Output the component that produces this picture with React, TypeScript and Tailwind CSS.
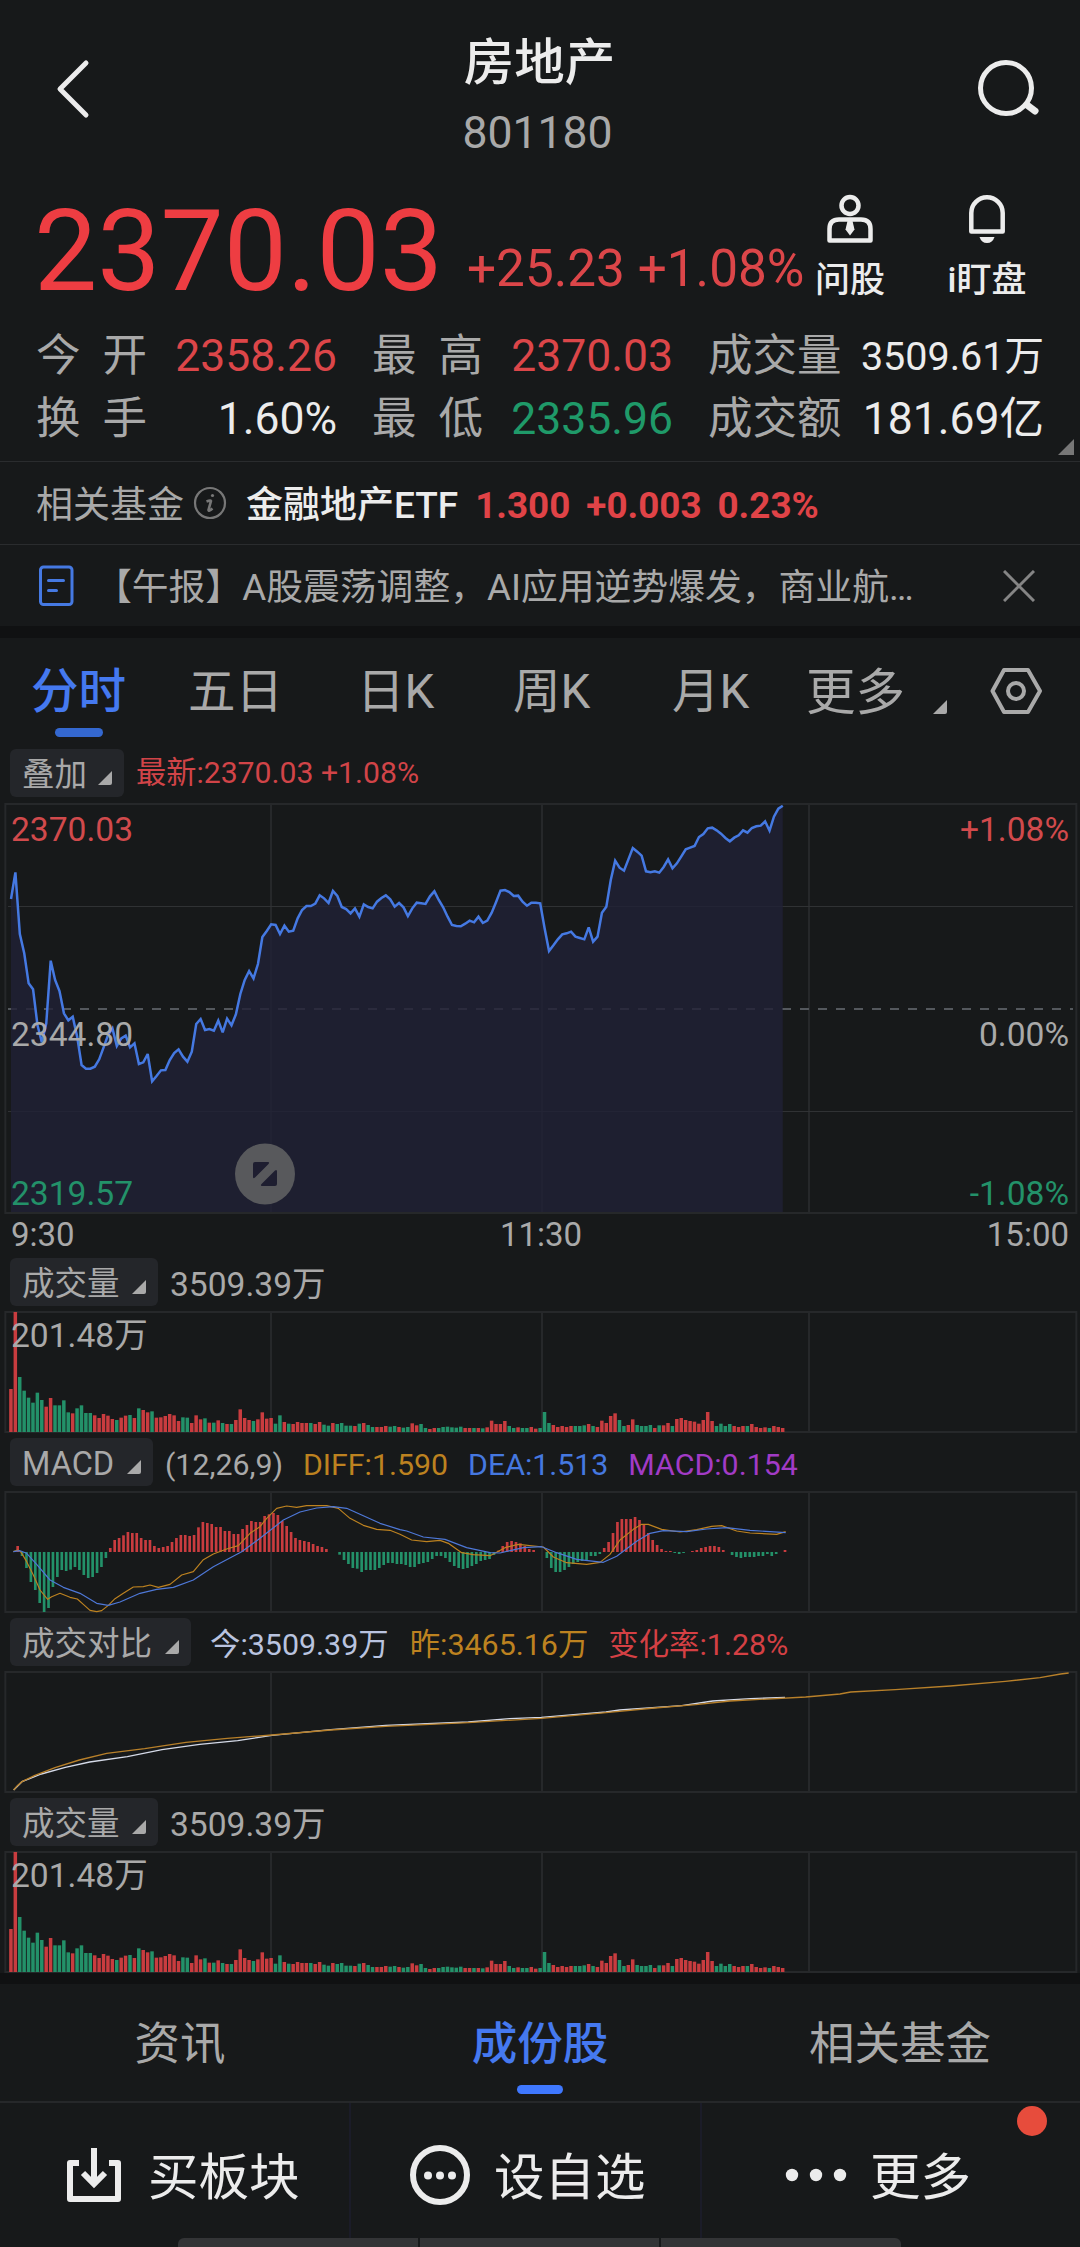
import React from 'react';

const PRICES = [
  327, 247, 432, 490, 580, 598, 705, 757, 700, 512, 570, 603, 670, 691, 680, 740, 825, 836, 836, 830, 808, 772, 735, 715,
  768, 745, 737, 772, 760, 822, 817, 792, 874, 858, 841, 840, 810, 789, 778, 800, 815, 785, 702, 687, 720, 717, 722, 692,
  727, 686, 706, 673, 612, 570, 543, 565, 522, 441, 423, 403, 405, 432, 407, 425, 422, 385, 360, 348, 348, 341, 316, 325,
  339, 303, 318, 351, 357, 370, 355, 380, 343, 351, 355, 335, 324, 316, 328, 350, 339, 352, 378, 355, 338, 340, 342, 319,
  304, 330, 352, 380, 405, 408, 409, 401, 392, 397, 380, 399, 392, 368, 336, 302, 300, 306, 318, 317, 335, 347, 338, 338,
  340, 415, 483, 466, 448, 433, 430, 425, 440, 444, 448, 412, 455, 440, 368, 350, 270, 212, 233, 242, 208, 174, 185, 197,
  244, 247, 244, 248, 231, 208, 235, 220, 199, 178, 173, 168, 141, 132, 115, 113, 121, 131, 144, 154, 143, 136, 121, 128,
  114, 109, 107, 94, 122, 80, 56, 47,
];

// Positive = up minute, negative = down minute
const VOLUMES = [
  129, 360, -165, -124, -103, -88, -118, -96, 76, 102, -80, -80, -95, -59, 56, -71, -80, -57, -57, 50, 42, 54, 49, 39,
  -36, 43, 49, -51, 42, -71, 66, 59, -62, 43, 44, 48, 54, 50, 33, -44, -43, 27, 50, 38, -41, 28, -28, 35, -27, 24, -24,
  36, 68, 42, 36, -33, 38, 59, 40, 42, -25, -50, 30, -25, 24, 30, 27, 27, -27, 24, 30, -22, -19, 27, -24, -27, -19, -19,
  18, -25, 27, -21, -15, 15, 15, 18, -16, -18, 15, -13, -15, 26, 20, -24, -12, 9, 12, -12, -15, -16, -14, -13, -16, 12,
  12, -12, 12, -11, 14, 34, 24, 24, 33, -18, -12, 14, -12, -12, 15, 10, -12, -60, -27, 21, 15, 18, 15, 18, -18, -18, -20,
  24, -18, 15, 34, 27, 48, 56, -36, -18, 21, 38, -21, -18, -18, -21, 12, -20, 20, 27, -18, 39, 42, 36, 33, 31, 25, 36, 60,
  33, -18, -25, -18, -24, 18, 15, 18, -18, 24, 15, 12, 14, -12, 18, 15, 12,
];

const MACD = [
  18, -12, -48, -90, -114, -153, -180, -168, -105, -75, -54, -57, -53, -45, -54, -69, -78, -75, -63, -45, -18, 12, 36, 42,
  50, 60, 57, 57, 42, 36, 36, 18, 12, 15, 18, 30, 42, 51, 51, 48, 51, 74, 90, 87, 84, 75, 75, 63, 63, 54, 54, 69, 81, 93,
  90, 90, 108, 113, 117, 111, 93, 78, 60, 42, 36, 33, 30, 24, 18, 15, 9, 0, 0, -8, -24, -36, -48, -50, -60, -54, -54, -54,
  -48, -39, -33, -33, -36, -36, -39, -45, -45, -36, -33, -30, -21, -12, -12, -18, -30, -42, -48, -51, -48, -42, -36, -27,
  -24, -21, -9, 4, 18, 30, 33, 30, 26, 18, 9, 6, 0, 0, -18, -48, -60, -60, -54, -45, -36, -30, -27, -24, -12, -12, -6, 12,
  30, 57, 90, 99, 99, 99, 105, 96, 84, 57, 36, 21, 9, 3, 3, -3, -6, -3, 0, 3, 6, 12, 15, 18, 18, 15, 6, 0, -9, -15, -18,
  -15, -15, -15, -12, -12, -6, -12, -6, 0, 6,
];

const DIFF =
  '40,179 53,174 62,179 80,209 100,249 120,294 143,322 155,314 180,304 210,316 232,321 250,337 270,355 290,359 305,356 325,340 345,320 370,304 400,285 430,284 450,279 475,286 510,277 545,249 580,239 610,203 640,186 680,171 715,161 750,124 780,104 800,79 830,49 860,42 890,46 920,41 980,41 1015,49 1050,79 1090,100 1130,112 1170,115 1200,127 1235,144 1280,149 1320,145 1345,154 1385,182 1420,188 1470,191 1515,167 1555,157 1630,165 1660,195 1700,212 1760,217 1800,211 1830,187 1860,144 1900,112 1925,97 1945,97 1985,112 2040,120 2090,113 2135,103 2165,101 2210,117 2250,123 2330,127 2357,119';
const DEA =
  '40,179 60,176 80,184 110,217 150,264 190,286 240,304 290,334 325,340 360,330 420,304 470,292 520,286 580,264 640,224 725,179 780,139 850,84 900,60 950,48 1000,44 1040,49 1080,67 1140,94 1200,113 1220,117 1270,135 1335,142 1400,167 1470,182 1500,183 1570,167 1625,164 1670,182 1730,202 1810,211 1850,193 1910,148 1950,124 1990,116 2060,119 2120,111 2180,107 2250,115 2357,122';

const YESTERDAY =
  '41,354 52,341 66,329 103,311 165,287 238,264 320,244 434,230 558,211 682,199 816,189 992,174 1157,163 1405,152 1624,139 1818,122 1963,108 2087,98 2190,87 2417,75 2520,66 2552,60 2686,53 2851,42 3016,28 3120,17 3182,6 3206,3';
const TODAY =
  '41,354 66,329 124,306 196,286 269,270 382,254 486,233 599,217 713,206 816,190 992,173 1157,160 1405,150 1529,140 1624,136 1818,120 1859,114 2045,101 2138,87 2252,80 2355,76';

const minuteX = (i: number) => 33 + i * 13.23;

const Corner: React.FC<{ className?: string }> = ({ className = '' }) => (
  <svg viewBox="0 0 14 14" className={`w-3.5 h-3.5 fill-current ${className}`}>
    <path d="M14 0v12a2 2 0 0 1-2 2H0z" />
  </svg>
);

const Badge: React.FC<{ label: string; className: string }> = ({ label, className }) => (
  <div className={`h-12 flex items-center justify-between pl-3 pr-3 rounded-md bg-[#24262a] text-[32.5px] leading-[48px] ${className}`}>
    <span className="pt-1">{label}</span>
    <Corner className="mt-2.5" />
  </div>
);

const SubFrame: React.FC<{ children: React.ReactNode }> = ({ children }) => (
  <svg viewBox="0 -3 3240 366" className="block w-[1080px] h-[122px]">
    <g fill="none" stroke="#26282a" strokeWidth="6">
      <rect x="16" y="0" width="3213" height="360" />
      <path d="M813 0V360M1626 0V360M2427 0V360" />
    </g>
    {children}
  </svg>
);

const VolumePanel: React.FC = () => (
  <section className="h-[180px]">
    <div className="h-[58px] pt-[5px] pl-2.5 flex items-start">
      <Badge label="成交量" className="w-[148px]" />
      <span className="ml-3 pt-0.5 text-[33.600px] leading-[50px]">3509.39万</span>
    </div>
    <div className="relative">
      <SubFrame>
        {VOLUMES.map((v, i) => (
          <rect
            key={i}
            x={minuteX(i) - 5.5}
            y={360 - Math.abs(v)}
            width="10.5"
            height={Math.abs(v)}
            fill={v > 0 ? '#c93c3f' : '#239169'}
          />
        ))}
      </SubFrame>
      <span className="absolute left-[11px] top-[3px] text-[33.600px] leading-[44px]">201.48万</span>
    </div>
  </section>
);

const MacdPanel: React.FC = () => (
  <section className="h-[180px]">
    <div className="h-[58px] pt-[5px] pl-2.5 flex items-start text-[30.300px] leading-[54px]">
      <Badge label="MACD" className="w-[143px]" />
      <span className="ml-3">(12,26,9)</span>
      <span className="ml-5 text-[#bd8220]">DIFF:1.590</span>
      <span className="ml-5 text-[#4578e0]">DEA:1.513</span>
      <span className="ml-5 text-[#a23bc6]">MACD:0.154</span>
    </div>
    <SubFrame>
      {MACD.map((v, i) => (
        <rect
          key={i}
          x={49 + i * 13.23}
          y={v > 0 ? 180 - v : 180}
          width="8"
          height={Math.abs(v)}
          fill={v > 0 ? '#c93c3f' : '#239169'}
        />
      ))}
      <polyline points={DIFF} fill="none" stroke="#bd8220" strokeWidth="3.5" strokeLinejoin="round" />
      <polyline points={DEA} fill="none" stroke="#4e78d8" strokeWidth="3.5" strokeLinejoin="round" />
    </SubFrame>
  </section>
);

const ComparePanel: React.FC = () => (
  <section className="h-[180px]">
    <div className="h-[58px] pt-[5px] pl-2.5 flex items-start text-[30.400px] leading-[53px]">
      <Badge label="成交对比" className="w-[181px]" />
      <span className="ml-[19px] text-[#b9c3df]">今:3509.39万</span>
      <span className="ml-[21px] text-[#bd8220]">昨:3465.16万</span>
      <span className="ml-5 text-[#d44044]">变化率:1.28%</span>
    </div>
    <SubFrame>
      <polyline points={TODAY} fill="none" stroke="#d5dae8" strokeWidth="4" />
      <polyline points={YESTERDAY} fill="none" stroke="#b8802a" strokeWidth="4" />
    </SubFrame>
  </section>
);

const PriceChart: React.FC = () => {
  const line = PRICES.map((y, i) => `${minuteX(i).toFixed(1)},${y}`).join(' ');
  return (
    <section>
      <div className="relative">
        <svg viewBox="0 39 3240 1236" className="block w-[1080px] h-[412px]">
          <g fill="none" stroke="#26282a" strokeWidth="6">
            <rect x="16" y="42" width="3213" height="1227" />
            <path d="M813 42V1269M1626 42V1269M2427 42V1269" />
            <path d="M24 349.5H3219M24 964.5H3219" stroke="#303234" strokeWidth="3" />
            <path d="M24 657H3219" stroke="#54585d" strokeDasharray="27 27" />
          </g>
          <polygon points={`33,1266 ${line} ${minuteX(175)},1266`} fill="#202036" fillOpacity="0.8" />
          <polyline points={line} fill="none" stroke="#4579e2" strokeWidth="7.5" strokeMiterlimit="3" />
        </svg>
        <div className="absolute inset-0 text-[33.600px] leading-10">
          <span className="absolute left-[11px] top-[7px] text-[#d14a4c]">2370.03</span>
          <span className="absolute left-[11px] top-[212px]">2344.80</span>
          <span className="absolute left-[11px] top-[371px] text-[#239169]">2319.57</span>
          <span className="absolute right-[11px] top-[7px] text-[#d14a4c]">+1.08%</span>
          <span className="absolute right-[11px] top-[212px]">0.00%</span>
          <span className="absolute right-[11px] top-[371px] text-[#239169]">-1.08%</span>
        </div>
        <button className="absolute left-[235px] top-[340px] w-[60px] h-[62px]">
          <svg viewBox="0 0 60 62">
            <ellipse cx="30" cy="31" rx="30" ry="30.500" fill="#58595c" />
            <path d="M20 19h13q2 0 0.500 2L20 34.500q-2 1.500-2-0.500V21q0-2 2-2zM42 28.500v12.500q0 2-2 2H27q-2 0-0.500-2L40 27.500q2-1.500 2 1z" fill="#1e1e30" />
          </svg>
        </button>
      </div>
      <div className="h-[38px] px-[11px] flex justify-between text-[33px] leading-10">
        <span className="w-28">9:30</span>
        <span className="pl-0.5">11:30</span>
        <span className="w-28 text-right">15:00</span>
      </div>
    </section>
  );
};

const Header: React.FC = () => (
  <header className="h-[178px] flex justify-between">
    <svg viewBox="0 0 36 60" className="w-9 h-[60px] ml-[55px] mt-[59px]" fill="none" stroke="#ececec" strokeWidth="5" strokeLinecap="round" strokeLinejoin="round">
      <path d="M31 4L5 30L31 56" />
    </svg>
    <div className="w-[300px] ml-[11px] text-center">
      <h1 className="mt-[27px] text-[50.500px] leading-[72px] font-medium text-[#ececec]">房地产</h1>
      <p className="mt-[7px] pr-1 text-[44.500px] leading-[54px]">801180</p>
    </div>
    <svg viewBox="0 0 64 60" className="w-16 h-[60px] mr-[39px] mt-[59px]" fill="none" stroke="#ececec" strokeWidth="5">
      <circle cx="29" cy="29" r="25.500" />
      <path d="M50 46L58 52" strokeWidth="7" strokeLinecap="round" />
    </svg>
  </header>
);

const Quote: React.FC = () => (
  <section className="h-[149px] pl-[34px] flex">
    <span className="w-[433px] pt-[9px] text-[112.500px] leading-[130px] text-[#ee3d42]">2370.03</span>
    <span className="w-[338px] pt-[61px] text-[51.300px] leading-[60px] text-[#dc4649] whitespace-nowrap">+25.23 +1.08%</span>
    <div className="w-[90px] pt-[16px] flex flex-col items-center text-[#ececec]">
      <svg viewBox="0 0 46 50" className="w-[46px] h-[50px]" fill="none" stroke="currentColor" strokeWidth="4.500">
        <circle cx="23" cy="11.500" r="8.500" />
        <path d="M2.500 46.500V35q0-9.500 9.500-9.500h22q9.500 0 9.500 9.500v11.500z" strokeLinejoin="round" />
        <path d="M20.500 27h5l2 8.500-4.500 6-4.500-6z" fill="currentColor" stroke="none" />
      </svg>
      <span className="mt-[12px] text-[35px] leading-[50px] font-medium">问股</span>
    </div>
    <div className="w-[110px] ml-[37px] pt-[16px] flex flex-col items-center text-[#ececec]">
      <svg viewBox="0 0 46 50" className="w-[46px] h-[50px]" fill="none" stroke="currentColor" strokeWidth="4.500">
        <path d="M7.300 37.500V19a15.700 15.700 0 0 1 31.400 0v18.500z" strokeLinejoin="round" />
        <path d="M15.500 43h15q-2 6-7.500 6t-7.500-6z" fill="currentColor" stroke="none" />
      </svg>
      <span className="mt-[12px] text-[35px] leading-[50px] font-medium whitespace-nowrap">i盯盘</span>
    </div>
  </section>
);

const Stat: React.FC<{ label: string; value: string; className: string; valueClass: string }> = ({ label, value, className, valueClass }) => (
  <div className={`flex justify-between items-center ${className}`}>
    <span className="flex justify-between min-w-[111px]">
      {label.split('').map((c) => (
        <span key={c}>{c}</span>
      ))}
    </span>
    <span className={valueClass}>{value}</span>
  </div>
);

const Stats: React.FC = () => (
  <section className="relative h-[135px] pl-9 pr-9 text-[44.500px] leading-[63px] border-b border-[#2a2c2e]">
    <div className="flex h-[63px] -translate-y-[2px]">
      <Stat label="今开" value="2358.26" className="w-[301px]" valueClass="text-[#dc4649]" />
      <Stat label="最高" value="2370.03" className="w-[301px] ml-[35px]" valueClass="text-[#dc4649]" />
      <Stat label="成交量" value="3509.61万" className="w-[336px] ml-[35px]" valueClass="text-[39.500px] text-[#ececec]" />
    </div>
    <div className="flex h-[63px] -translate-y-[2px]">
      <Stat label="换手" value="1.60%" className="w-[301px]" valueClass="text-[#ececec]" />
      <Stat label="最低" value="2335.96" className="w-[301px] ml-[35px]" valueClass="text-[#1f9a69]" />
      <Stat label="成交额" value="181.69亿" className="w-[336px] ml-[35px]" valueClass="text-[#ececec]" />
    </div>
    <svg viewBox="0 0 16 16" className="absolute right-1.5 bottom-1.5 w-4 h-4 fill-[#777]">
      <path d="M16 0v16H0z" />
    </svg>
  </section>
);

const FundRow: React.FC = () => (
  <section className="h-[83px] pl-9 flex items-center text-[37px] border-b border-[#2a2c2e]">
    <span className="pt-[5px]">相关基金</span>
    <svg viewBox="0 0 34 34" className="ml-[9px] w-[34px] h-[34px]" fill="none" stroke="#777" strokeWidth="2.2">
      <circle cx="17" cy="17" r="15" />
      <circle cx="19.500" cy="9.500" r="1.600" fill="#777" stroke="none" />
      <path d="M13.500 15.500q4-1.500 4.500-0.500l-2.500 9q0 2 4-1.500" strokeWidth="2.600" />
    </svg>
    <span className="ml-[19px] pt-[5px] text-[#ececec] font-medium">金融地产ETF</span>
    <span className="ml-[17px] pt-[5px] flex gap-[16px] text-[36.800px] font-bold text-[#e04347]">
      <span>1.300</span>
      <span>+0.003</span>
      <span>0.23%</span>
    </span>
  </section>
);

const NewsRow: React.FC = () => (
  <section className="h-[81px] pl-[38px] pr-[45px] flex items-center">
    <svg viewBox="0 0 36 42" className="w-9 h-[42px]" fill="none" stroke="#4579e2" strokeWidth="3">
      <rect x="2.500" y="2" width="31.500" height="37.500" rx="3" />
      <path d="M10.500 15.500h15M10.500 25.500h8" strokeLinecap="round" />
    </svg>
    <span className="ml-[21px] pt-[4px] flex-1 text-[36.800px] whitespace-nowrap">【午报】A股震荡调整，AI应用逆势爆发，商业航…</span>
    <svg viewBox="0 0 32 32" className="w-8 h-8" stroke="#858585" strokeWidth="3">
      <path d="M1 1L31 31M31 1L1 31" />
    </svg>
  </section>
);

const PeriodTabs: React.FC = () => (
  <nav className="h-[106px] pl-[31px] flex text-[47.500px] leading-[109px]">
    <div className="w-[157px] flex flex-col text-[#4579f0] font-medium">
      <span className="h-[90px]">分时</span>
      <span className="ml-6 w-12 h-[9px] rounded-full bg-[#3468d0]" />
    </div>
    <span className="w-[169px]">五日</span>
    <span className="w-[156px]">日K</span>
    <span className="w-[159px]">周K</span>
    <span className="w-[134px]">月K</span>
    <span className="w-[127px] text-[49.500px] leading-[110px]">更多</span>
    <Corner className="mt-[62px]" />
    <svg viewBox="0 0 52 48" className="ml-[43px] mt-[29px] w-[52px] h-12" fill="none" stroke="currentColor" strokeWidth="4">
      <path d="M14 3h24l12 21-12 21H14L2.500 24z" strokeLinejoin="round" />
      <circle cx="26" cy="24" r="8" />
    </svg>
  </nav>
);

const BottomTabs: React.FC = () => (
  <nav className="h-[119px] grid grid-cols-3 text-[45.500px] leading-[121px] text-center border-b-2 border-[#26282a]">
    <span>资讯</span>
    <div className="flex flex-col items-center text-[#4579f0] font-medium">
      <span className="h-[101px]">成份股</span>
      <span className="w-[46px] h-[9px] rounded-full bg-[#3f78ff]" />
    </div>
    <span>相关基金</span>
  </nav>
);

const Toolbar: React.FC = () => (
  <footer className="relative h-36 flex text-[50.500px] leading-[150px] text-[#ececec]">
    <button className="w-[351px] pl-[66px] flex border-r-2 border-[#1b1c28]">
      <svg viewBox="0 0 56 56" className="mt-[44px] w-14 h-14" fill="none" stroke="currentColor" strokeWidth="6">
        <path d="M13 16H4v36h48V16H43" strokeLinejoin="round" />
        <path d="M28 1v36M17 26l11 11 11-11" />
      </svg>
      <span className="ml-[26px]">买板块</span>
    </button>
    <button className="w-[351px] pl-[58px] flex border-r-2 border-[#1b1c28]">
      <svg viewBox="0 0 62 62" className="mt-[41px] w-[62px] h-[62px]" fill="currentColor">
        <circle cx="31" cy="31" r="27" fill="none" stroke="currentColor" strokeWidth="6" />
        <circle cx="19" cy="31.500" r="4" />
        <circle cx="31" cy="31.500" r="4" />
        <circle cx="43" cy="31.500" r="4" />
      </svg>
      <span className="ml-[23px]">设自选</span>
    </button>
    <button className="flex-1 pl-[83px] flex">
      <svg viewBox="0 0 62 14" className="mt-[65px] w-[62px] h-3.5" fill="currentColor">
        <circle cx="7" cy="7" r="6.200" />
        <circle cx="31" cy="7" r="6.200" />
        <circle cx="55" cy="7" r="6.200" />
      </svg>
      <span className="ml-[23px]">更多</span>
    </button>
    <span className="absolute left-[1017px] top-[3px] w-[30px] h-[30px] rounded-full bg-[#e74c3c]" />
    <span className="absolute left-[178px] bottom-0 w-[723px] h-[9px] rounded-t-md bg-[#333436] flex justify-evenly">
      <span className="w-0.5 bg-[#17191a]" />
      <span className="w-0.5 bg-[#17191a]" />
    </span>
  </footer>
);

const App: React.FC = () => (
  <main className="w-[1080px] h-[2247px] overflow-hidden bg-[#17191a] text-[#a9a9a9] font-[Roboto,'Noto_Sans_CJK_SC',sans-serif]">
    <Header />
    <Quote />
    <Stats />
    <FundRow />
    <NewsRow />
    <div className="h-3 bg-[#101112]" />
    <PeriodTabs />
    <div className="h-[59px] pt-[5px] pl-2.5 flex items-start">
      <Badge label="叠加" className="w-[114px]" />
      <span className="ml-3 text-[30.200px] leading-[48px] text-[#d14448]">最新:2370.03 +1.08%</span>
    </div>
    <PriceChart />
    <VolumePanel />
    <MacdPanel />
    <ComparePanel />
    <VolumePanel />
    <div className="h-[11px] bg-[#101112]" />
    <BottomTabs />
    <Toolbar />
  </main>
);

export default App;
